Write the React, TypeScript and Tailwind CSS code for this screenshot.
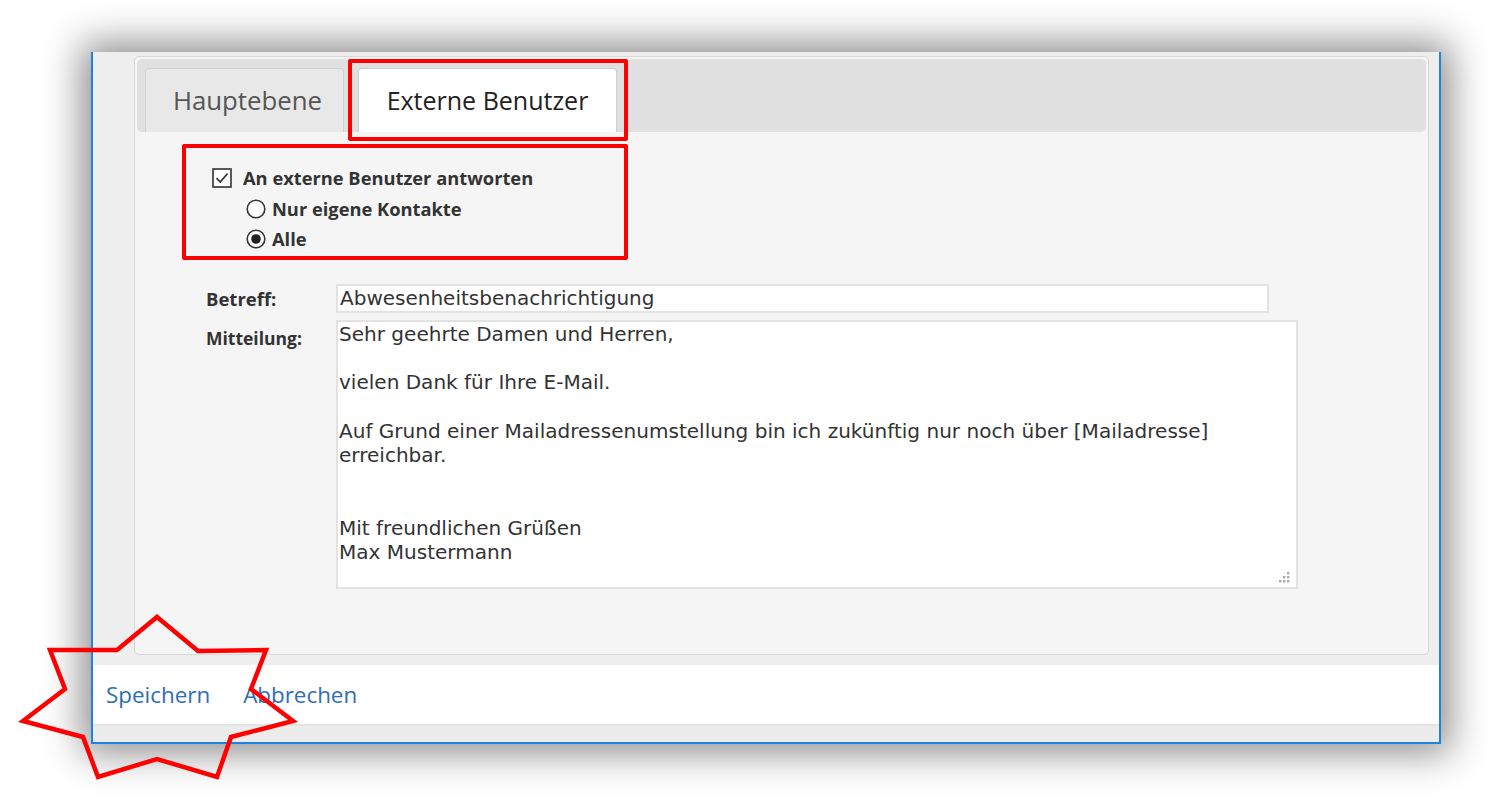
import React from "react";

const sans = { fontFamily: '"Open Sans", "Noto Sans", Arial, sans-serif' };
const mono = { fontFamily: '"DejaVu Sans", Verdana, sans-serif' };

function CheckBox() {
  return (
    <svg width="20" height="20" viewBox="0 0 20 20" className="shrink-0">
      <rect x="1" y="1" width="18" height="18" fill="#fff" stroke="#333" strokeWidth="1.6" />
      <path d="M4.5 10.2 L8.3 14 L15.5 5.5" fill="none" stroke="#333" strokeWidth="1.7" />
    </svg>
  );
}

function Radio({ checked }: { checked?: boolean }) {
  return (
    <svg width="20" height="20" viewBox="0 0 20 20" className="shrink-0">
      <circle cx="10" cy="10" r="8.8" fill="#fff" stroke="#333" strokeWidth="1.6" />
      {checked && <circle cx="10" cy="10" r="4.8" fill="#222" />}
    </svg>
  );
}

const message = `Sehr geehrte Damen und Herren,

vielen Dank für Ihre E-Mail.

Auf Grund einer Mailadressenumstellung bin ich zukünftig nur noch über [Mailadresse]
erreichbar.


Mit freundlichen Grüßen
Max Mustermann`;

export default function App() {
  return (
    <div className="relative w-[1494px] h-[805px] bg-white overflow-hidden pl-[91px] pt-[52px]" style={sans}>
      <div className="w-[1350px] h-[692px] flex flex-col bg-[#eeeeee] border-x-2 border-b-2 border-[#1c84de] shadow-[0_0_36px_9px_rgba(0,0,0,0.45)]">
        <div className="flex-1 pl-[41px] pr-[10px] pt-[4px] pb-[10px] flex flex-col">
          <div className="flex-1 bg-[#f5f5f5] border border-[#d8d8d8] rounded-[5px] p-[2px] flex flex-col">
            {/* tab bar */}
            <div className="h-[73px] bg-[#e0e0e0] rounded-[5px] flex items-end pl-[8px] gap-[14px]">
              <div className="w-[199px] h-[64px] pl-[6px] bg-[#e8e8e8] border border-b-0 border-[#d2d2d2] rounded-t-[4px] flex items-center justify-center text-[25.8px] text-[#555]">
                Hauptebene
              </div>
              <div className="w-[259px] h-[64px] bg-white border border-b-0 border-[#cfcfcf] rounded-t-[4px] flex items-center justify-center text-[25px] text-[#222]">
                Externe Benutzer
              </div>
            </div>
            {/* options */}
            <div className="pl-[75px] pt-[36px] flex flex-col font-bold text-[#333] text-[18.3px]">
              <div className="h-[20px] flex items-center gap-[11px]">
                <CheckBox />
                <span>An externe Benutzer antworten</span>
              </div>
              <div className="pl-[34px] mt-[11px] h-[20px] flex items-center gap-[6px]">
                <Radio />
                <span>Nur eigene Kontakte</span>
              </div>
              <div className="pl-[34px] mt-[10px] h-[20px] flex items-center gap-[6px]">
                <Radio checked />
                <span>Alle</span>
              </div>
            </div>
            {/* form */}
            <div className="pl-[69px] pt-[35px] flex flex-col gap-[7px]">
              <div className="flex">
                <div className="w-[130px] pt-[1px] font-bold text-[18.5px] text-[#333]">Betreff:</div>
                <div className="w-[933px] h-[29px] bg-white border-2 border-[#e2e2e2] pl-[2px] text-[20px] leading-[25px] text-[#333]" style={mono}>
                  Abwesenheitsbenachrichtigung
                </div>
              </div>
              <div className="flex">
                <div className="w-[130px] pt-[5px] font-bold text-[17.5px] text-[#333]">Mitteilung:</div>
                <div className="relative w-[962px] h-[269px] bg-white border-2 border-[#e2e2e2] pl-[1px] text-[20.05px] leading-[24.2px] text-[#333] whitespace-pre" style={mono}>
                  {message}
                  <svg className="absolute right-[6px] bottom-[4px]" width="12" height="12" viewBox="0 0 12 12">
                    <rect x="9" y="1" width="2.4" height="2.4" fill="#aaa" />
                    <rect x="5" y="5" width="2.4" height="2.4" fill="#aaa" />
                    <rect x="9" y="5" width="2.4" height="2.4" fill="#aaa" />
                    <rect x="1" y="9" width="2.4" height="2.4" fill="#aaa" />
                    <rect x="5" y="9" width="2.4" height="2.4" fill="#aaa" />
                    <rect x="9" y="9" width="2.4" height="2.4" fill="#aaa" />
                  </svg>
                </div>
              </div>
            </div>
          </div>
        </div>
        <div className="h-[59px] bg-white flex items-center pl-[13px] gap-[33px] text-[22.4px] text-[#2f6eb5]">
          <span>Speichern</span>
          <span>Abbrechen</span>
        </div>
        <div className="h-[18px] bg-[#ececec] border-t-2 border-[#e3e3e3]" />
      </div>

      {/* red annotations */}
      <div className="absolute left-[348px] top-[59px] w-[280px] h-[82px] border-[4px] border-[#ff0000] rounded-[2px]" />
      <div className="absolute left-[182px] top-[144px] w-[446px] h-[116px] border-[4px] border-[#ff0000] rounded-[2px]" />
      <svg className="absolute left-0 top-[600px]" width="320" height="200" viewBox="0 0 320 200">
        <polygon
          points="157,17 198,51 266,50 251,89 293,121 231,137 217,177 157,159 98,177 83,137 23,121 65,89 50,50 117,50"
          fill="none"
          stroke="#ff0000"
          strokeWidth="4.5"
          strokeLinejoin="miter"
        />
      </svg>
    </div>
  );
}
